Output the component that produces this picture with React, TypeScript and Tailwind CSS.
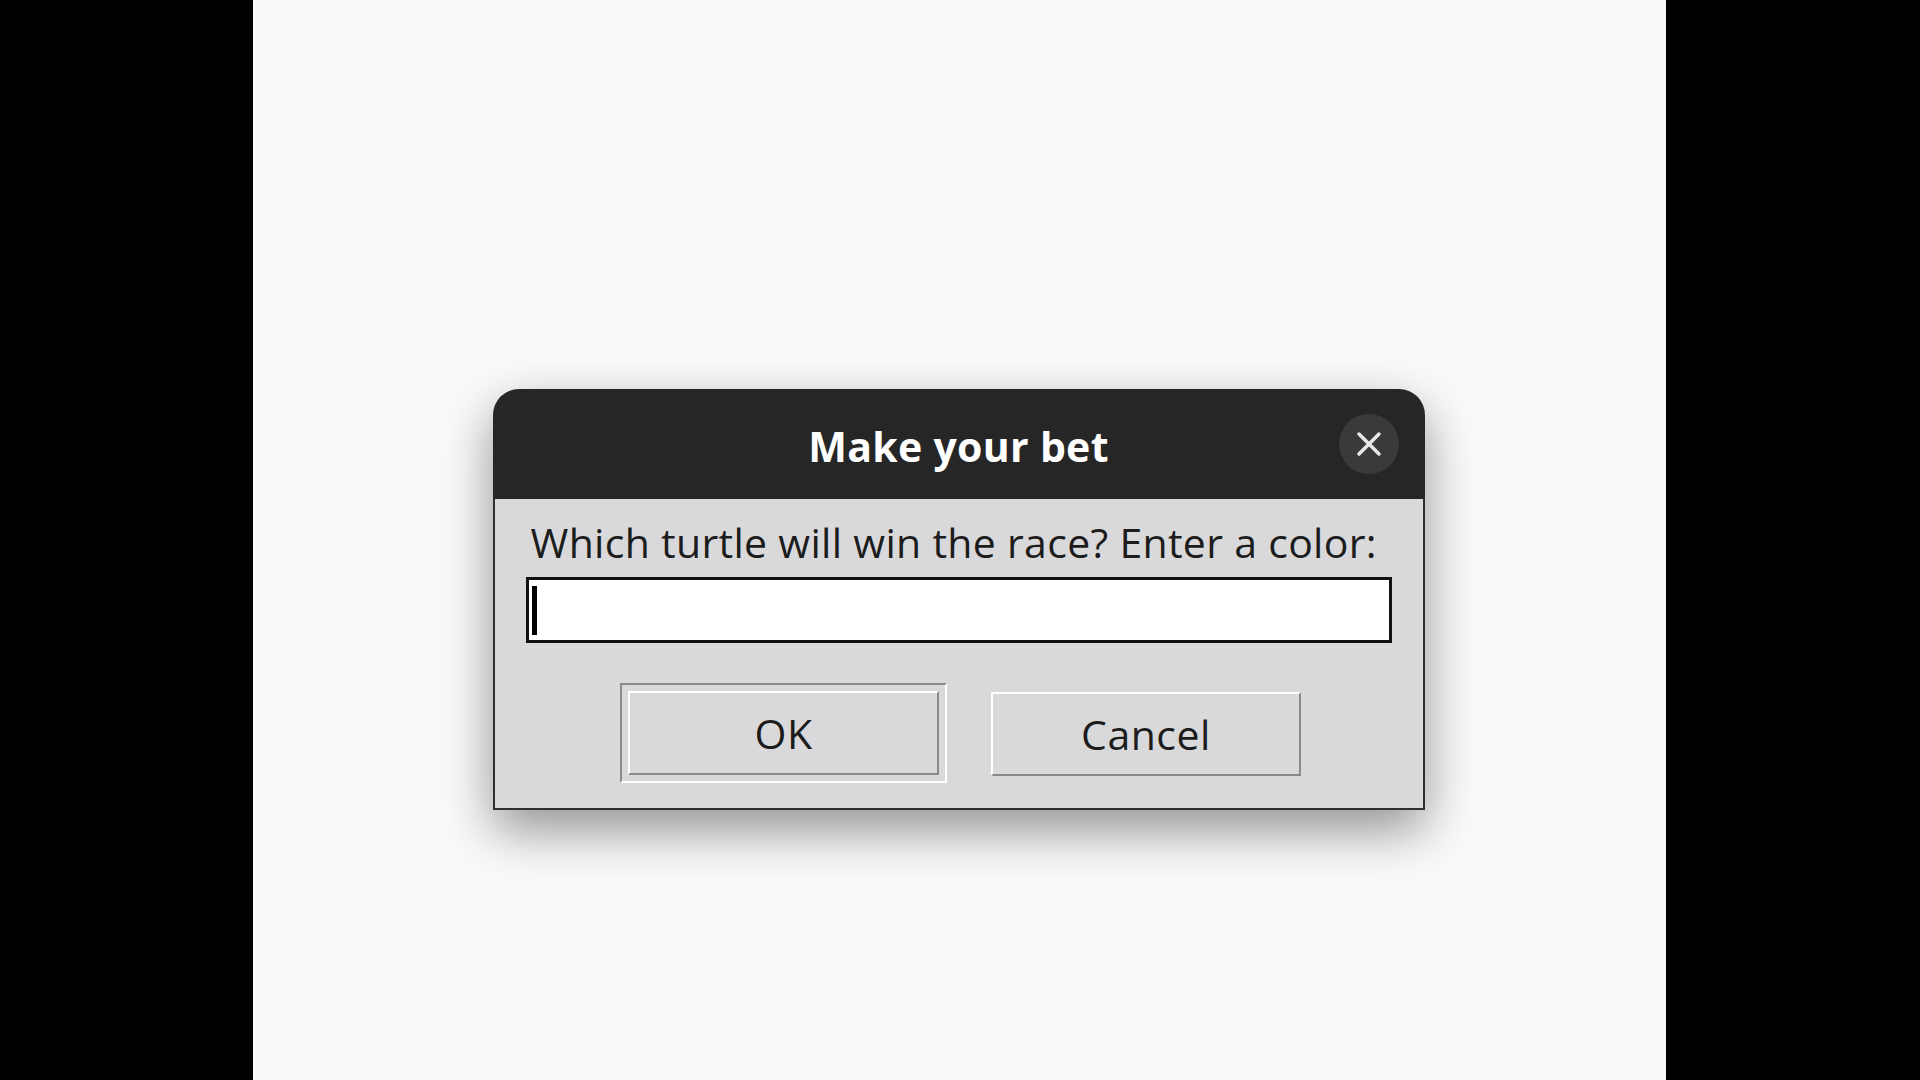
import React from 'react';

const font = { fontFamily: '"Open Sans", "Noto Sans", sans-serif' };

const CloseIcon = () => (
    <svg width="26" height="26" viewBox="0 0 26 26" fill="none">
        <path d="M3 3L23 23M23 3L3 23" stroke="#e8e8e8" strokeWidth="3.5" strokeLinecap="round" />
    </svg>
);

const BetDialog = () => {
    return (
        <div className="w-[932px] rounded-t-[26px] shadow-[0_20px_52px_rgba(0,0,0,0.42)]" style={font}>
            {/* title bar */}
            <div className="relative h-[110px] rounded-t-[26px] bg-[#262626] flex items-center justify-center">
                <span className="text-[41px] font-bold text-white leading-none mt-[4px] tracking-[0.3px]">Make your bet</span>
                <button className="absolute right-[26px] top-[25px] w-[60px] h-[60px] rounded-full bg-[#3a3a3a] flex items-center justify-center">
                    <CloseIcon />
                </button>
            </div>

            {/* body */}
            <div className="bg-[#d9d9db] border-x-2 border-b-2 border-[#2e2e2e] px-[31px] pt-[19px] pb-[25px]">
                <p className="text-[41px] leading-[48px] text-[#1c1c1c] pl-[5px] tracking-[0.3px]">
                    Which turtle will win the race? Enter a color:
                </p>
                <div className="mt-[11px] h-[66px] bg-white border-[3px] border-[#111] flex items-center pl-[3px]">
                    <div className="w-[5px] h-[49px] bg-black" />
                </div>

                <div className="mt-[40px] flex justify-center gap-[44px] pl-[4px]">
                    {/* default button ring */}
                    <div className="border-2 border-t-[#8a8a8a] border-l-[#8a8a8a] border-r-white border-b-white p-[6px]">
                        <button className="w-[311px] h-[84px] bg-[#d9d9db] border-2 border-t-white border-l-white border-r-[#8a8a8a] border-b-[#8a8a8a] text-[41px] leading-none text-[#1c1c1c] tracking-[0.5px]">
                            OK
                        </button>
                    </div>
                    <div className="pt-[9px]">
                        <button className="w-[310px] h-[84px] bg-[#d9d9db] border-2 border-t-white border-l-white border-r-[#8a8a8a] border-b-[#8a8a8a] text-[41px] leading-none text-[#1c1c1c] tracking-[0.5px]">
                            Cancel
                        </button>
                    </div>
                </div>
            </div>
        </div>
    );
};

export default function App() {
    return (
        <div className="flex w-full h-[1080px] overflow-hidden">
            <div className="w-[253px] bg-black" />
            <div className="flex-1 bg-[#fafafd] flex justify-center items-start pt-[389px] pr-[2px]">
                <BetDialog />
            </div>
            <div className="w-[254px] bg-black" />
        </div>
    );
}
